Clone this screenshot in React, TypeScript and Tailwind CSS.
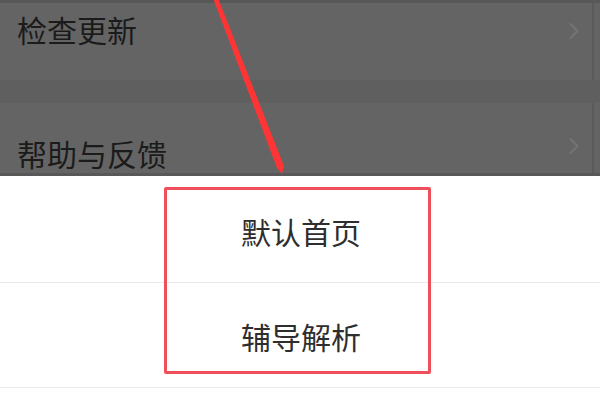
import { ChevronRight } from 'lucide-react';

const topRows = ['检查更新', '帮助与反馈'];

export default function App() {
    return (
        <div className="relative w-[600px] h-[402px] overflow-hidden bg-white font-['Noto_Sans_CJK_SC',sans-serif]">
            {/* Dimmed settings list */}
            <div className="bg-[#646464] border-t-[3px] border-b-[3px] border-[#585858]">
                <div className="relative h-[77px] pl-[17px] pt-[11px] border-r-2 border-[#5a5a5a] mr-[6px]">
                    <span className="block text-[30px] leading-[30px] text-[#1b1b1b]">{topRows[0]}</span>
                    <ChevronRight className="absolute right-[4px] top-[14px] h-[28px] w-[28px] text-[#747474]" strokeWidth={1.8} />
                </div>
                <div className="h-[23px] bg-[#5f5f5f]" />
                <div className="relative h-[70px] pl-[17px] pt-[35px] border-r-2 border-[#5a5a5a] mr-[6px]">
                    <span className="block text-[30px] leading-[30px] text-[#1b1b1b]">{topRows[1]}</span>
                    <ChevronRight className="absolute right-[4px] top-[29px] h-[28px] w-[28px] text-[#747474]" strokeWidth={1.8} />
                </div>
            </div>

            {/* Popup options */}
            <div className="relative">
                <div className="h-[107px] border-b border-[#ebebeb] flex items-center justify-center pl-[2px]">
                    <span className="text-[30px] leading-[30px] text-[#2e2e2e] mt-[4px]">默认首页</span>
                </div>
                <div className="h-[105px] border-b border-[#ebebeb] flex items-center justify-center pl-[2px]">
                    <span className="text-[30px] leading-[30px] text-[#2e2e2e] mt-[2px]">辅导解析</span>
                </div>

                {/* Red highlight box */}
                <div className="absolute left-[164px] top-[11px] w-[267px] h-[187px] border-[3px] border-[#ee4f5a] rounded-[2px]" />
            </div>

            {/* Red pointer line */}
            <svg className="absolute left-0 top-0" width="600" height="402" viewBox="0 0 600 402">
                <path d="M213 -2 L218 -2 L284 166 L282 174 L277 168 Z" fill="#ff3434" />
            </svg>
        </div>
    );
}
